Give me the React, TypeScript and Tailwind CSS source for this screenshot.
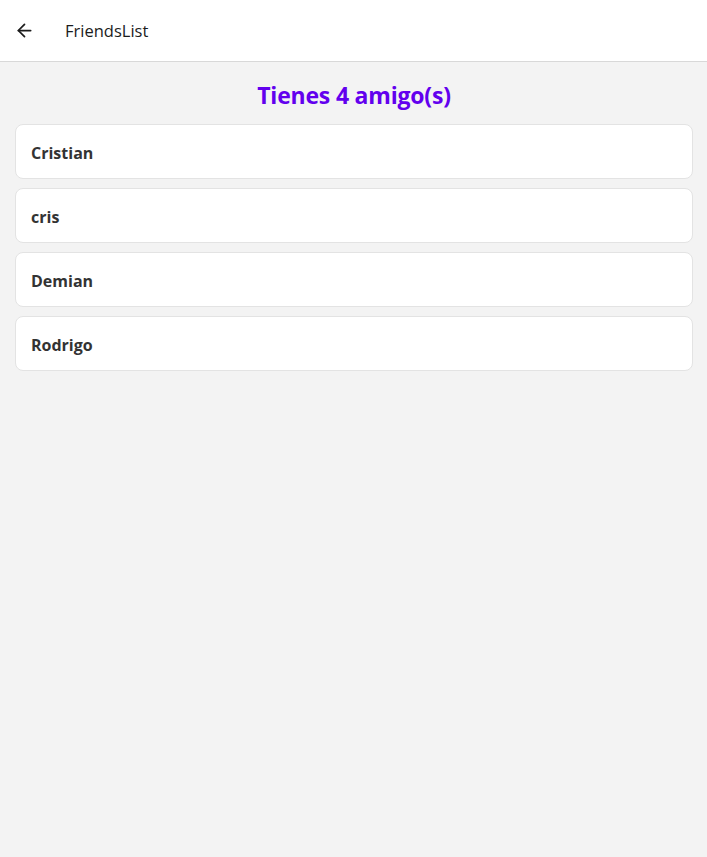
import { ArrowLeft } from "lucide-react";

const friends = ["Cristian", "cris", "Demian", "Rodrigo"];

export default function App() {
  return (
    <div
      className="min-h-[857px] bg-[#f3f3f3] flex flex-col"
      style={{ fontFamily: '"Open Sans", "Noto Sans", sans-serif' }}
    >
      <header className="h-[62px] bg-white border-b border-[#d8d8d8] flex items-center">
        <button className="w-[48px] h-[48px] flex items-center justify-center">
          <ArrowLeft size={21} strokeWidth={2} className="text-[#1c1c1c]" />
        </button>
        <h1 className="ml-[17px] pt-[2px] text-[16.5px] text-[#1c1c1c]">FriendsList</h1>
      </header>

      <main className="pl-[15px] pr-[14px] pt-[18px]">
        <h2 className="text-center text-[23px] font-bold text-[#6200ee] leading-[30px] mb-[14px] tracking-[-0.2px]">
          Tienes {friends.length} amigo(s)
        </h2>
        <div className="flex flex-col gap-[9px]">
          {friends.map((name) => (
            <div
              key={name}
              className="h-[55px] bg-white border border-[#e3e3e3] rounded-[8px] flex items-center px-[15px] pt-[3px]"
            >
              <span className="text-[16px] font-bold text-[#333333]">{name}</span>
            </div>
          ))}
        </div>
      </main>
    </div>
  );
}
